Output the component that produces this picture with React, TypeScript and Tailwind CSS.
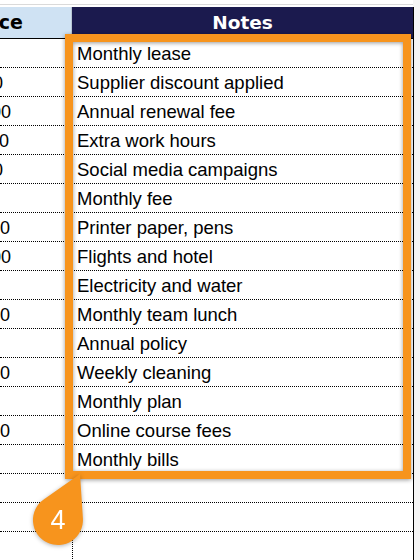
import React from "react";

const rows: { note: string; val: string; cls: string }[] = [
  { note: "Monthly lease", val: "$90", cls: "ml-[-44px]" },
  { note: "Supplier discount applied", val: "$300", cls: "ml-[-37px]" },
  { note: "Annual renewal fee", val: "$1,200", cls: "ml-[-44px]" },
  { note: "Extra work hours", val: "$1,500", cls: "ml-[-46px]" },
  { note: "Social media campaigns", val: "$300", cls: "ml-[-37px]" },
  { note: "Monthly fee", val: "$50", cls: "ml-[-44px]" },
  { note: "Printer paper, pens", val: "$1,000", cls: "ml-[-45px]" },
  { note: "Flights and hotel", val: "$2,400", cls: "ml-[-44px]" },
  { note: "Electricity and water", val: "$80", cls: "ml-[-44px]" },
  { note: "Monthly team lunch", val: "$1,200", cls: "ml-[-45px]" },
  { note: "Annual policy", val: "$60", cls: "ml-[-44px]" },
  { note: "Weekly cleaning", val: "$1,600", cls: "ml-[-45px]" },
  { note: "Monthly plan", val: "$40", cls: "ml-[-44px]" },
  { note: "Online course fees", val: "$1,800", cls: "ml-[-45px]" },
  { note: "Monthly bills", val: "$70", cls: "ml-[-44px]" },
  { note: "", val: "", cls: "" },
  { note: "", val: "", cls: "" },
  { note: "", val: "", cls: "" },
];

export default function App() {
  return (
    <div className="relative w-[420px] h-[560px] overflow-hidden bg-white font-['Liberation_Sans',Arial,sans-serif] text-black">
      {/* top strip */}
      <div className="h-[7px] flex">
        <div className="w-[413px] pt-[4px]">
          <div className="h-px bg-[#dadada]" />
        </div>
        <div className="w-[7px] bg-[#f5f5f5]" />
      </div>
      {/* header */}
      <div className="flex h-[32px]">
        <div className="w-[72px] bg-[#cfe2f3] border-r border-b border-r-[#b9c6d2] border-b-black overflow-hidden flex items-center">
          <span className="ml-[-31px] whitespace-nowrap font-['DejaVu_Sans',Verdana,sans-serif] font-bold text-[19px] leading-none">
            Price
          </span>
        </div>
        <div className="w-[341px] bg-[#1b1a4e] border-b border-black flex items-center justify-center pt-[1px]">
          <span className="font-['DejaVu_Sans',Verdana,sans-serif] font-bold text-[18.5px] leading-none text-white">
            Notes
          </span>
        </div>
        <div className="w-[7px] bg-[#f5f5f5] border-l border-black" />
      </div>
      {/* rows */}
      {rows.map((r, i) => (
        <div key={i} className="flex h-[29px]">
          <div className="w-[72px] border-b border-dotted border-black overflow-hidden flex items-center pt-[2px]">
            <span className={`${r.cls} whitespace-nowrap text-[18px] leading-none`}>{r.val}</span>
          </div>
          <div className="w-[341px] border-l border-b border-dotted border-black flex items-center pl-[4px] pt-[3px]">
            <span className="text-[18.5px] leading-none whitespace-nowrap">{r.note}</span>
          </div>
          <div className="w-[7px] bg-[#f5f5f5] border-l border-black" />
        </div>
      ))}

      {/* orange frame */}
      <div className="absolute left-[65px] top-[34px] w-[346px] h-[445px] border-[8px] border-[#f7941d] drop-shadow-[0_1px_2px_rgba(0,0,0,0.4)]" />

      {/* callout pin */}
      <div className="absolute left-[28px] top-[466px] w-[64px] h-[88px] drop-shadow-[0_1px_2px_rgba(0,0,0,0.3)]">
        <svg className="absolute inset-0" width="64" height="88" viewBox="0 0 64 88">
          <path d="M52 8 L54.9 52.3 A25 25 0 1 1 15.7 33.5 Z" fill="#f7941d" />
        </svg>
        <div className="absolute left-[5px] top-[29px] w-[50px] h-[50px] flex items-center justify-center text-white text-[27px] leading-none">
          4
        </div>
      </div>
    </div>
  );
}
